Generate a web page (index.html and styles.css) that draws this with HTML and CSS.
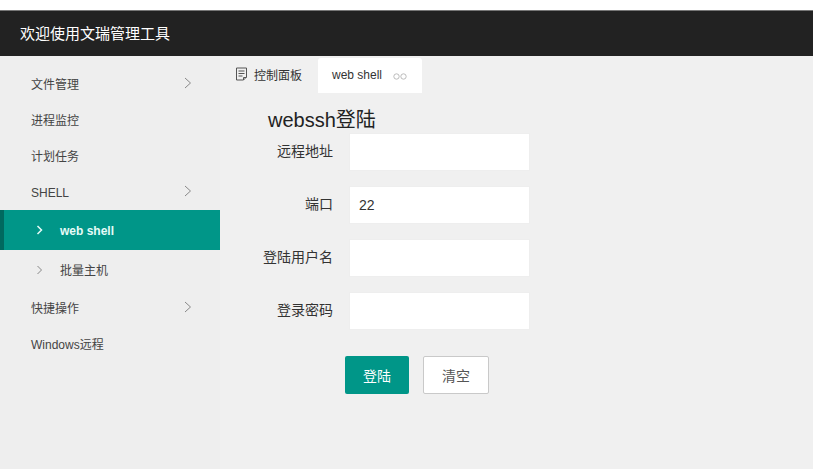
FILE: index.html
```html
<!DOCTYPE html>
<html lang="zh">
<head>
<meta charset="utf-8">
<title>webssh</title>
<link rel="stylesheet" href="styles.css">
</head>
<body>
<div class="topstrip"></div>
<header class="header">欢迎使用文瑞管理工具</header>
<div class="main">
  <nav class="sidebar">
    <a class="item"><span>文件管理</span><svg class="chev" viewBox="0 0 8 12"><path d="M1 1l5.500 5-5.500 5"/></svg></a>
    <a class="item"><span>进程监控</span></a>
    <a class="item"><span>计划任务</span></a>
    <a class="item"><span class="latin">SHELL</span><svg class="chev" viewBox="0 0 8 12"><path d="M1 1l5.500 5-5.500 5"/></svg></a>
    <a class="sub active"><svg class="subchev" viewBox="0 0 8 10"><path d="M1.500 1l4 4-4 4"/></svg><span class="latin">web shell</span></a>
    <a class="sub"><svg class="subchev" viewBox="0 0 8 10"><path d="M1.500 1l4 4-4 4"/></svg><span>批量主机</span></a>
    <a class="item"><span>快捷操作</span><svg class="chev" viewBox="0 0 8 12"><path d="M1 1l5.500 5-5.500 5"/></svg></a>
    <a class="item"><span>Windows远程</span></a>
  </nav>
  <section class="content">
    <div class="tabs">
      <div class="tab">
        <svg class="tabicon" viewBox="0 0 13 14"><path d="M1.500 1h10v9l-3 3h-7z"/><path d="M3.500 4h6M3.500 6.500h6M3.500 9h4M8.500 13v-2.500h3"/></svg>
        <span>控制面板</span>
      </div>
      <div class="tab current">
        <span>web shell</span>
        <svg class="close" viewBox="0 0 14 7"><circle cx="3.500" cy="3.500" r="2.700"/><circle cx="10.500" cy="3.500" r="2.700"/></svg>
      </div>
    </div>
    <h1 class="title">webssh登陆</h1>
    <form class="form">
      <label class="row"><span class="label">远程地址</span><input class="input" type="text"></label>
      <label class="row"><span class="label">端口</span><input class="input" type="text" value="22"></label>
      <label class="row"><span class="label">登陆用户名</span><input class="input" type="text"></label>
      <label class="row"><span class="label">登录密码</span><input class="input" type="password"></label>
      <div class="actions">
        <button class="btn primary" type="button">登陆</button>
        <button class="btn ghost" type="button">清空</button>
      </div>
    </form>
  </section>
</div>
</body>
</html>
```
FILE: styles.css
```css
* { box-sizing: border-box; }
html, body { height: 100%; }
body {
  margin: 0;
  height: 469px;
  overflow: hidden;
  background: #f0f0f0;
  font-family: "Liberation Sans", "Noto Sans CJK SC", sans-serif;
  color: #333;
  display: flex;
  flex-direction: column;
}
.topstrip { flex: none; height: 11px; background: #fff; border-bottom: 1px solid #777; }
.header {
  flex: none;
  height: 45px;
  background: #222;
  color: #fff;
  font-size: 15px;
  line-height: 45px;
  padding-left: 20px;
}
.main { flex: 1; display: flex; min-height: 0; }
.sidebar { width: 220px; flex: none; background: #eee; padding-top: 10px; }
.item {
  height: 36px;
  display: flex;
  align-items: center;
  justify-content: space-between;
  padding: 0 28px 0 31px;
  font-size: 12px;
  color: #444;
}
.item > span { margin-top: -1px; }
.item > span.latin, .sub > span.latin { margin-top: 2px; }
.chev { width: 8px; height: 12px; margin-top: -2px; }
.chev path, .subchev path { fill: none; stroke: #888; stroke-width: 1; }
.sub {
  height: 40px;
  display: flex;
  align-items: center;
  padding-left: 36px;
  font-size: 12px;
  color: #444;
}
.sub > span { margin-top: -1px; }
.subchev { width: 8px; height: 10px; margin-right: 16px; }
.sub.active {
  background: #009688;
  border-left: 4px solid #00695f;
  padding-left: 32px;
  color: #e6fbf8;
  font-weight: 700;
}
.sub.active .subchev path { stroke: #e6fbf8; stroke-width: 1.500; }
.content { flex: 1; min-width: 0; }
.tabs { display: flex; height: 37px; padding-left: 14px; padding-top: 2px; }
.tab {
  display: flex;
  align-items: center;
  font-size: 12px;
  color: #333;
  padding-bottom: 3px;
  width: 84px;
  gap: 6px;
}
.tab.current {
  width: 104px;
  background: #fff;
  border-radius: 3px 3px 0 0;
  padding-left: 14px;
  padding-bottom: 2px;
  gap: 11px;
}
.tabicon { width: 13px; height: 14px; margin-left: 1px; margin-bottom: 1px; }
.tabicon path { fill: none; stroke: #555; stroke-width: 1; }
.close { width: 14px; height: 7px; margin-top: 4px; }
.close circle { fill: none; stroke: #bbb; stroke-width: 1; }
.title {
  margin: 14px 0 0 48px;
  height: 26px;
  font-size: 20px;
  line-height: 26px;
  font-weight: 400;
  color: #222;
}
.form { width: 310px; }
.row { display: flex; align-items: center; height: 38px; margin-bottom: 15px; }
.label { width: 113px; margin-top: -4px; text-align: right; font-size: 14px; color: #333; flex: none; }
.input {
  margin-left: 16px;
  width: 181px;
  height: 38px;
  border: 1px solid #eee;
  background: #fff;
  padding: 0 9px;
  font: 14px "Liberation Sans", sans-serif;
  color: #333;
  outline: none;
}
.actions { display: flex; gap: 14px; margin-top: 26px; padding-left: 125px; }
.btn {
  height: 38px;
  padding: 0;
  font: 14px "Liberation Sans", "Noto Sans CJK SC", sans-serif;
  border-radius: 2px;
  cursor: pointer;
}
.primary { width: 64px; background: #009688; border: 0; color: #fff; }
.ghost { width: 66px; background: #fff; border: 1px solid #c9c9c9; color: #555; }
```
